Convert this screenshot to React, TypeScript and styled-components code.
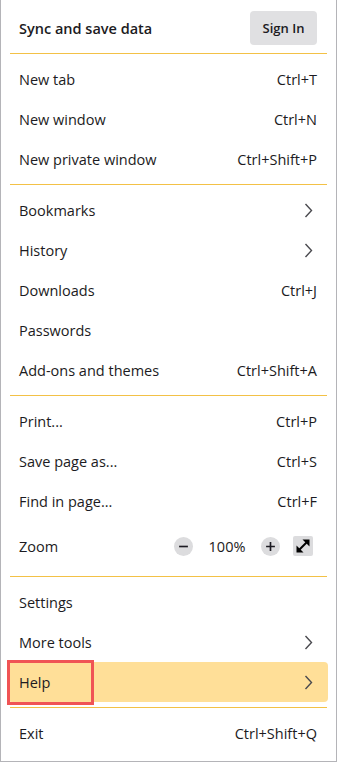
import React from "react";
import styled, { createGlobalStyle } from "styled-components";

const GlobalStyle = createGlobalStyle`
  html, body {
    margin: 0;
    padding: 0;
    background: #ffffff;
  }
  body {
    font-family: "Open Sans", "Noto Sans", sans-serif;
    color: #1c1b22;
  }
`;

const SEPARATOR = "#f3c146";

type Item =
  | { kind: "row"; label: string; shortcut?: string; arrow?: boolean; active?: boolean }
  | { kind: "zoom" }
  | { kind: "sep" };

const items: Item[] = [
  { kind: "row", label: "New tab", shortcut: "Ctrl+T" },
  { kind: "row", label: "New window", shortcut: "Ctrl+N" },
  { kind: "row", label: "New private window", shortcut: "Ctrl+Shift+P" },
  { kind: "sep" },
  { kind: "row", label: "Bookmarks", arrow: true },
  { kind: "row", label: "History", arrow: true },
  { kind: "row", label: "Downloads", shortcut: "Ctrl+J" },
  { kind: "row", label: "Passwords" },
  { kind: "row", label: "Add-ons and themes", shortcut: "Ctrl+Shift+A" },
  { kind: "sep" },
  { kind: "row", label: "Print...", shortcut: "Ctrl+P" },
  { kind: "row", label: "Save page as...", shortcut: "Ctrl+S" },
  { kind: "row", label: "Find in page...", shortcut: "Ctrl+F" },
  { kind: "zoom" },
  { kind: "sep" },
  { kind: "row", label: "Settings" },
  { kind: "row", label: "More tools", arrow: true },
  { kind: "row", label: "Help", arrow: true, active: true },
  { kind: "sep" },
  { kind: "row", label: "Exit", shortcut: "Ctrl+Shift+Q" },
];

const Chevron = () => (
  <svg width="9" height="15" viewBox="0 0 9 15">
    <path d="M1.5 1 L7.5 7.5 L1.5 14" fill="none" stroke="#4a4a4f" strokeWidth="1.4" />
  </svg>
);

const App = () => {
  return (
    <>
      <GlobalStyle />
      <Panel>
        <Header>
          <HeaderTitle>Sync and save data</HeaderTitle>
          <SignIn>Sign In</SignIn>
        </Header>
        <Separator />
        {items.map((item, i) => {
          if (item.kind === "sep") return <Separator key={i} />;
          if (item.kind === "zoom")
            return (
              <ZoomRow key={i}>
                <Label>Zoom</Label>
                <ZoomControls>
                  <RoundButton>
                    <svg width="11" height="11" viewBox="0 0 10 10">
                      <path d="M1 5 H9" stroke="#1c1b22" strokeWidth="1.5" />
                    </svg>
                  </RoundButton>
                  <ZoomValue>100%</ZoomValue>
                  <RoundButton>
                    <svg width="11" height="11" viewBox="0 0 10 10">
                      <path d="M1 5 H9 M5 1 V9" stroke="#1c1b22" strokeWidth="1.5" />
                    </svg>
                  </RoundButton>
                  <FullscreenButton>
                    <svg width="16" height="16" viewBox="0 0 16 16">
                      <path d="M3.5 12.5 L12.5 3.5" stroke="#000" strokeWidth="2" />
                      <path d="M7.5 1.5 H14.5 V8.5 Z" fill="#000" />
                      <path d="M1.5 7.5 V14.5 H8.5 Z" fill="#000" />
                    </svg>
                  </FullscreenButton>
                </ZoomControls>
              </ZoomRow>
            );
          return (
            <Row key={i} $active={item.active}>
              <Label>{item.label}</Label>
              {item.shortcut && <Shortcut>{item.shortcut}</Shortcut>}
              {item.arrow && (
                <ArrowWrap>
                  <Chevron />
                </ArrowWrap>
              )}
              {item.active && <Highlight />}
            </Row>
          );
        })}
      </Panel>
    </>
  );
};

const Panel = styled.div`
  box-sizing: border-box;
  width: 337px;
  height: 762px;
  border: 1px solid #b4b4b8;
  border-top: 0;
  background: #ffffff;
  padding: 0 8px 8px 7px;
  display: flex;
  flex-direction: column;
`;

const Header = styled.div`
  display: flex;
  align-items: center;
  justify-content: space-between;
  padding: 11px 11px 8px 11px;
`;

const HeaderTitle = styled.span`
  font-size: 14.5px;
  font-weight: 600;
  color: #1c1b22;
`;

const SignIn = styled.button`
  box-sizing: border-box;
  width: 67px;
  height: 34px;
  border: 0;
  border-radius: 4px;
  background: #e0e0e2;
  font-family: "Open Sans", "Noto Sans", sans-serif;
  font-size: 13px;
  font-weight: 600;
  color: #1c1b22;
  padding: 0;
`;

const Separator = styled.div`
  height: 1px;
  background: ${SEPARATOR};
  margin: 0 1px 5px 2px;
  div + & {
    margin-top: 5px;
  }
  ${Header} + & {
    margin-top: 0;
  }
`;

const Row = styled.div<{ $active?: boolean }>`
  position: relative;
  height: 40px;
  display: flex;
  align-items: center;
  justify-content: space-between;
  padding: 0 11px 0 11px;
  border-radius: 4px;
  background: ${(p) => (p.$active ? "#ffdf98" : "transparent")};
`;

const Label = styled.span`
  font-size: 14.5px;
  color: #1c1b22;
`;

const Shortcut = styled.span`
  font-size: 14.5px;
  color: #1c1b22;
`;

const ArrowWrap = styled.span`
  display: flex;
  align-items: center;
  margin-right: 4px;
`;

const Highlight = styled.div`
  position: absolute;
  left: -1px;
  top: -2px;
  width: 87px;
  height: 45px;
  box-sizing: border-box;
  border: 3px solid #f05455;
  pointer-events: none;
`;

const ZoomRow = styled(Row)`
  height: 50px;
`;

const ZoomControls = styled.div`
  display: flex;
  align-items: center;
`;

const RoundButton = styled.span`
  width: 19px;
  height: 19px;
  border-radius: 50%;
  background: #dcdcde;
  display: flex;
  align-items: center;
  justify-content: center;
`;

const ZoomValue = styled.span`
  font-size: 14.5px;
  color: #1c1b22;
  width: 68px;
  text-align: center;
`;

const FullscreenButton = styled.span`
  width: 20px;
  height: 20px;
  margin-left: 13px;
  margin-right: 4px;
  border-radius: 2px;
  background: #dcdcde;
  display: flex;
  align-items: center;
  justify-content: center;
`;

export default App;
